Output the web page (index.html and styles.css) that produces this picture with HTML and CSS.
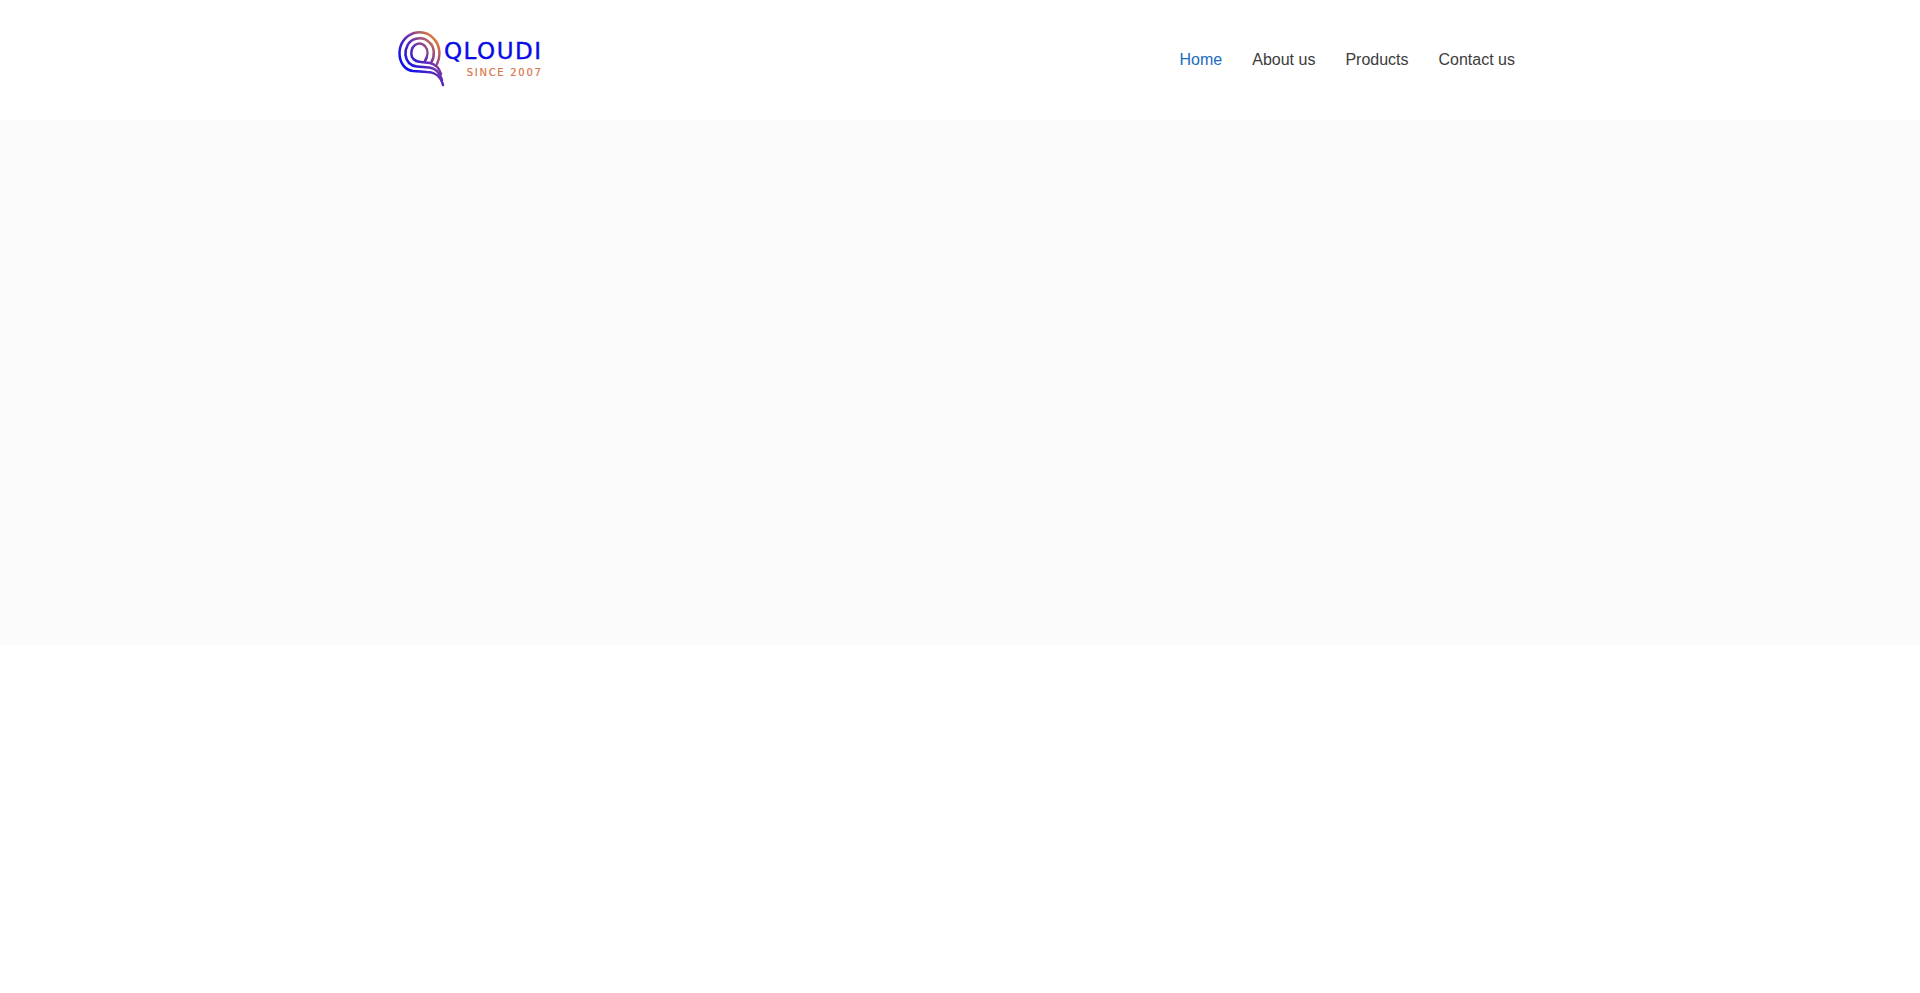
FILE: index.html
```html
<!DOCTYPE html>
<html lang="en">
<head>
<meta charset="utf-8">
<title>Qloudi</title>
<link rel="stylesheet" href="styles.css">
</head>
<body>
<header class="site-header">
  <div class="container header-row">
    <a class="logo" href="#">
      <svg class="logo-mark" viewBox="0 0 48 58" width="48" height="58" aria-hidden="true">
        <defs>
          <linearGradient id="qgrad" gradientUnits="userSpaceOnUse" x1="2" y1="40" x2="42" y2="6">
            <stop offset="0.2" stop-color="#1212e8"/>
            <stop offset="0.55" stop-color="#6a2fb0"/>
            <stop offset="1" stop-color="#f58a20"/>
          </linearGradient>
        </defs>
        <g fill="none" stroke="url(#qgrad)" stroke-width="2.5" stroke-linecap="round">
          <path d="M40 33C44 25 43 14 37 8C32 2 24 0.5 17 2C8 5 2.5 13 2.500 22C2.500 32 8 39 16 40L30 41C38 41 44 46 46 54"/>
          <path d="M34.500 31C38 25 37.500 16 33 12C29 7.500 23 6.500 18 8C11.500 10 8 17 8.500 24C9.500 31 14 35 20 35.500L32 36.500C38 37 43 42 45 49"/>
          <path d="M28 30C31 25 31.500 19 28 15C25 12 21 12 18 14C14.500 16.500 13.500 22 15 26C17 30 20 30.500 24 31L33 32C38 33 42 37 44 43"/>
        </g>
      </svg>
      <span class="logo-text">
        <span class="logo-name">QLOUDI</span>
        <span class="logo-since">SINCE 2007</span>
      </span>
    </a>
    <nav class="main-nav">
      <a class="nav-link active" href="#">Home</a>
      <a class="nav-link" href="#">About us</a>
      <a class="nav-link" href="#">Products</a>
      <a class="nav-link" href="#">Contact us</a>
    </nav>
  </div>
</header>
<main>
  <section class="hero"></section>
</main>
</body>
</html>
```
FILE: styles.css
```css
* { box-sizing: border-box; }
html, body { margin: 0; padding: 0; }
body {
  background: #fff;
  font-family: "Liberation Sans", Arial, sans-serif;
  font-size: 16px;
  color: #3c3c3c;
  min-height: 993px;
}
.site-header { height: 120px; background: #fff; }
.container { width: 1140px; margin: 0 auto; padding: 0 15px; }
.header-row {
  height: 100%;
  display: flex;
  align-items: center;
  justify-content: space-between;
}
.logo {
  display: flex;
  align-items: flex-start;
  text-decoration: none;
  margin-left: -8px;
}
.logo-mark { display: block; flex: none; }
.logo-text {
  display: flex;
  flex-direction: column;
  align-items: flex-end;
  margin: 7px 0 0 -1px;
}
.logo-name {
  font-family: "DejaVu Sans", sans-serif;
  font-size: 23px;
  line-height: 26px;
  letter-spacing: 1.5px;
  -webkit-text-stroke: 0.4px #0a0ae6;
  color: #0a0ae6;
}
.logo-since {
  font-family: "DejaVu Sans", sans-serif;
  font-size: 10px;
  line-height: 12px;
  letter-spacing: 1.7px;
  margin-top: 3px;
  -webkit-text-stroke: 0.2px #d9764a;
  color: #d9764a;
}
.main-nav { display: flex; gap: 30px; }
.nav-link { color: #3c3c3c; text-decoration: none; line-height: 24px; }
.nav-link.active { color: #1a6bbf; }
.hero { height: 525px; background: #fbfbfb; }
```
